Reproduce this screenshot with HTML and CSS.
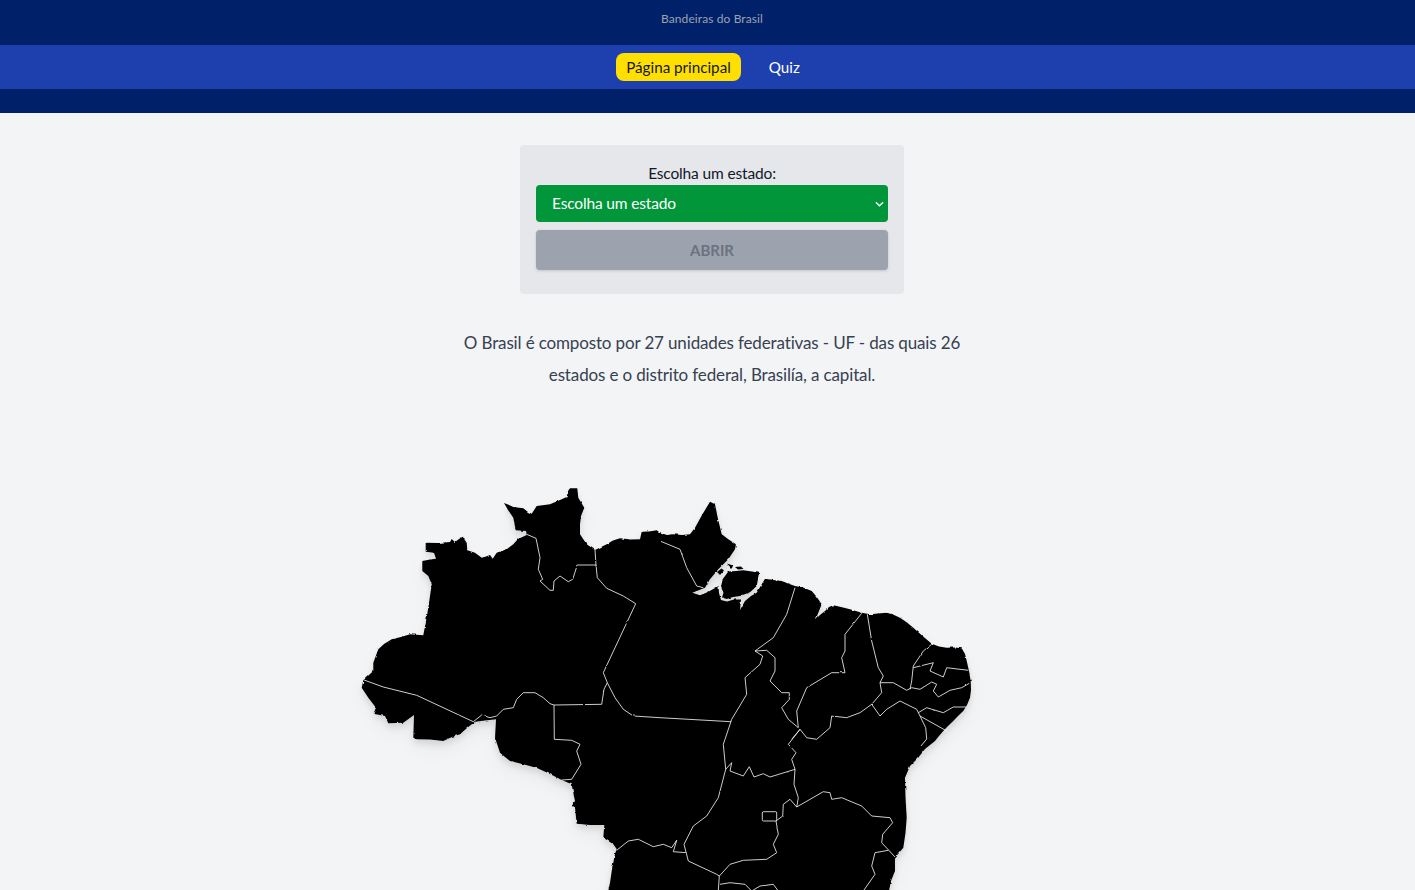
FILE: index.html
```html
<!DOCTYPE html>
<html lang="pt-BR">
<head>
  <meta charset="UTF-8">
  <title>Bandeiras do Brasil</title>
  <link rel="stylesheet" href="styles.css">
</head>
<body>

<header class="site-header">
  <p class="site-title">Bandeiras do Brasil</p>
  <nav class="site-nav">
    <a class="nav-link active" href="#">Página principal</a>
    <a class="nav-link" href="#">Quiz</a>
  </nav>
  <div class="header-foot"></div>
</header>

<main class="content">
  <form class="state-card">
    <label class="state-label" for="stateSelect">Escolha um estado:</label>
    <div class="select-wrap">
      <select id="stateSelect" class="state-select">
        <option>Escolha um estado</option>
      </select>
      <svg class="select-arrow" viewBox="0 0 10 6" width="9" height="6"><path d="M1 1l4 4 4-4" fill="none" stroke="#fff" stroke-width="1.5"/></svg>
    </div>
    <button class="open-btn" type="button" disabled>ABRIR</button>
  </form>

  <p class="intro">O Brasil é composto por 27 unidades federativas - UF - das quais 26 estados e o distrito federal, Brasilía, a capital.</p>

  <svg class="map" viewBox="350 470 724 420" width="724" height="420" role="img" aria-label="Mapa do Brasil">
    <defs>
      <!-- deixa o contorno do litoral e das divisas irregular -->
      <filter id="rough" x="-5%" y="-5%" width="110%" height="110%" color-interpolation-filters="sRGB">
        <feTurbulence type="fractalNoise" baseFrequency="0.2" numOctaves="2" seed="4"/>
        <feDisplacementMap in="SourceGraphic" scale="2.4" xChannelSelector="R" yChannelSelector="G"/>
        <feGaussianBlur stdDeviation="0.35"/>
      </filter>
      <filter id="rough-line" x="-5%" y="-5%" width="110%" height="110%" color-interpolation-filters="sRGB">
        <feTurbulence type="fractalNoise" baseFrequency="0.16" numOctaves="1" seed="9"/>
        <feDisplacementMap in="SourceGraphic" scale="2" xChannelSelector="R" yChannelSelector="G"/>
        <feGaussianBlur stdDeviation="0.3"/>
      </filter>
    </defs>
    <g class="land">
      <g filter="url(#rough)">
      <!-- continente -->
      <path d="M425.7 541.7L438 542L450 541L451.7 538L455 541L459 538L462.7 535.7L466.7 541.7L467.3 549.3L475 551.7L481.7 556.7L486 555.5L490 554L492.7 557.7L496.7 551.7L506.7 548.3L513.3 543.3L518 538L526.7 534L526 530L515.7 529.3L513.3 516.7L508 509L504 502L508 503.5L513.3 506L523.3 507.3L528 511L531.7 512.7L536.7 505L550 503.3L560 499L566.7 496L568 490L570 487.3L577.3 487.3L578.3 496.7L584.3 506.7L581 515L580 523.3L580 533.3L586.7 543.3L595 549L606.7 543.3L613 539.5L620 537.3L630 538.5L640 538.3L641.7 530.7L649 530.5L656.7 529.3L660 531.7L667 534L673.3 533.3L682 534L690 533.3L695 526.7L702 514L710 500.7L715 503.3L718 518L721.7 533.3L728.3 538.3L736 543.3L735 548.3L728.3 558.3L718.3 568.3L710 578.3L705 586.7L692.3 591.7L700 594.3L708 591L718.5 585L719 592L721 599L727 600.5L734 598.5L741 598.5L740 609L745 600L751 595L756.7 591.7L761.7 583.3L765 577.7L773 579L781.7 580L788 582.5L795 585L803 586.5L811.7 590L816 595L818.3 598.3L821.7 603.3L815.7 618.3L820 614L825 610L829 606L833.3 604.3L841 606L850 608.3L861.7 611.7L870 613.3L878 612.5L886.7 611.7L893 613.5L900 616.7L907 621.5L913.3 626.7L922 634.5L931.7 642.7L939 645.5L946.7 646.7L955 646.5L961.7 647.3L965 653L966.7 660L969 670L970.7 680L971 689L970 696.7L967 704L963.3 710L958 715L953.3 720L948 725L943.3 730L939 735L935 740L925 748L918 757L910 765L905 776.7L905.5 796L906.7 816.7L905.5 832L903.3 846.7L895 856.7L895 870L891 880L887 900L606 900L610 881.7L612 868L615 853L616.7 848L613.3 843.3L603.3 836.7L604.3 824L590 824L576.7 822.7L575 806.7L571.7 805L575 800L573 791L571.7 783.3L561.7 779L550 773L537 767L523.3 763.3L510 760L505 756L500 751.7L495 736.7L496 718.3L485 719.5L475 720.7L467 727L460 733.3L452 736L443.3 740L430 738.5L416.7 738.3L413.3 736.7L414 714L403.3 721.7L388.3 722.3L385 715L373.3 712.7L376 706.7L368.3 696.7L361.7 686.7L363.3 679.3L373.3 670L373.3 661.7L378.3 648.3L384 643L391.7 638.3L401 636L410 633.3L423.3 634.3L426 620L428.3 606.7L430 595L431.7 583.3L428.3 575L422.3 570L422.3 560L430 558.5L436 557.7L434 551.7L425.7 550.7Z"/>
      <!-- ilha de Marajó -->
      <path d="M722.5 578.5L728.3 570.5L736 570L743.3 569.3L752 570.5L759 571.7L758 578L756.7 585L750 591.2L740 595L733 596L726.7 598L722 596.5L723.5 591.7L721 586Z"/>
      <!-- ilhas do estuário -->
      <path d="M717 571L721.5 567.5L724 569.5L720 574Z"/>
      <path d="M727 562.5L733 564.5L731 567Z"/>
      <path d="M735 566L741 565.5L743.5 568L738 568.5Z"/>
      </g>
    </g>

    <g class="borders" filter="url(#rough-line)">
      <path d="M526.7 533.3L536 537.3L538 547L540 556.7L538.3 568.3L542.7 578.3L540 580L550 589.3L553.3 589.3L554 580L560 575L568.3 580.7L572.7 578.3L577.3 564L596 564"/>
      <path d="M595 549L596 564L597.3 576.7L606.7 587.3L623.3 595L635.7 602.7L603.3 671.7L607.3 681.7L604 688.3L601.7 703.3L554 704L550 702.7L543.3 696.7L535 691.7L523.3 691.7L516.7 698.3L513.3 706.7L503.3 708.3L496.7 715L490 716.7L481.7 714L473.3 720.7"/>
      <path d="M364 679L383.3 686L416.7 694.3L473.3 720.7"/>
      <path d="M554 704L554.3 738.3L571.7 739.3L580 743.3L576.7 750L581 763.3L571.7 778.3L561.7 779"/>
      <path d="M607.3 681.7L615 696.7L623.3 708.3L633.3 715L660 716.7L731 720.7"/>
      <path d="M660 540L680 548.3L686.7 566.7L696.7 585L703.3 586.7"/>
      <path d="M795 586.7L786.7 613.3L773.3 636.7L755 650L762.7 655L760 663.3L745 676.7L746.7 693.3L731.7 718.3L725 738.3L723.3 743.3L725.7 768.3"/>
      <path d="M755 650L766.7 649.3L775 656.7L775 670L770 680L781.7 691.7L789.3 691.7L789.3 698.3L781.7 706.7L788.3 718.3L798.3 726.7"/>
      <path d="M861.7 612.3L845 633.3L845 650L841.7 656.7L845 671.7L831.7 671.7L806.7 686.7L796.7 710L798.3 726.7"/>
      <path d="M867.3 613.3L871.7 640L878.3 666.7L883.3 675L880 681.7L881.7 691.7L871.7 703.3L860 711.7L846.7 716.7L831.7 715L830 726.7L816.7 738.3L806.7 736.7L800 728.3L791.7 738.3"/>
      <path d="M871.7 703.3L880 715L886.7 708.3L900 700L916.7 708.3L920 715L946.7 730"/>
      <path d="M920 715L925.7 726.7L926.7 738L921 745"/>
      <path d="M880 681.7L893.3 681.7L906.7 689.3L911.7 686.7L920 688.3L931.7 681L936.7 683.3L933.3 690L938.3 696L950 689.3L961.7 686.7L969.3 682.3"/>
      <path d="M931.7 643.3L923.3 650L913.3 665L911.7 680L910 688.3"/>
      <path d="M913.3 666.7L933.3 661.7L930 670L943.3 676L946.7 666.7L968.3 669.3"/>
      <path d="M918.3 711.7L926.7 706.7L943.3 711.7L953.3 706L966 706"/>
      <path d="M800 728.3L788.3 743.3L796 751.7L791.7 758.3L795 768.3L794 783.3L798.3 796.7L796.7 806"/>
      <path d="M795 768.3L770 776L763.3 772.7L754 776L749.3 765.7L743.3 775L730 770L731.7 761.7L725.7 768.3"/>
      <path d="M725.7 768.3L718.3 796.7L706.7 815L693.3 825L684 843.3L688.3 860L716.7 873.3L719.3 875"/>
      <path d="M616.7 849.3L628.3 840L638.3 838.3L653.3 845.7L663.3 843.3L671.7 846.7L676.7 839.3L673.3 850.7L686 851.7"/>
      <path d="M719.3 875L730 863.3L743.3 859.3L766.7 858.3L776.7 851.7L773.3 843.3L778.3 833.3L776 820L782.7 815L783.3 803.3L790 798.3L796.7 806"/>
      <path d="M763.5 810.7H775.5Q776.7 810.7 776.7 812V818.7Q776.7 820 775.5 820H763.5Q762.3 820 762.3 818.7V812Q762.3 810.7 763.5 810.7Z"/>
      <path d="M796.7 806L823.3 790.7L830 791.7L831.7 798.3L841.7 796.7L861.7 805L871.7 815L890 816.7L892.7 821.7L882.7 833.3L881.7 841.7L895 856"/>
      <path d="M888.3 849.3L875 851.7L871.7 865L875 873.3L863.3 890"/>
      <path d="M719.3 875L718.3 890"/>
      <path d="M720 883.3L730 881.7L745 883.3L751.7 890L760 885L773.3 883.3L778.3 890"/>
    </g>
  </svg>
</main>

</body>
</html>
```

FILE: styles.css
```css
html {
  overflow: hidden;
}

body {
  margin: 0;
  width: 1424px;
  background: #f3f4f6;
  font-family: "Lato", "Noto Sans", sans-serif;
  color: #111827;
}

.site-header {
  background: #002169;
}

.site-title {
  margin: 0;
  height: 45px;
  line-height: 37px;
  text-align: center;
  font-size: 12px;
  letter-spacing: 0.1px;
  color: #9ca3af;
}

.site-nav {
  display: flex;
  justify-content: center;
  align-items: center;
  gap: 18px;
  height: 44px;
  padding-left: 2px;
  background: #1e40af;
}

.nav-link {
  padding: 0 10px;
  height: 28px;
  line-height: 28px;
  border-radius: 8px;
  font-size: 15.2px;
  color: #fff;
  text-decoration: none;
}

.nav-link.active {
  background: #ffdf00;
  color: #111827;
}

.header-foot {
  height: 24px;
}

.content {
  display: flex;
  flex-direction: column;
  align-items: center;
  padding-top: 32px;
}

.state-card {
  display: flex;
  flex-direction: column;
  box-sizing: border-box;
  width: 384px;
  height: 149px;
  padding: 16px;
  background: #e5e7eb;
  border-radius: 4px;
}

.state-label {
  height: 24px;
  line-height: 24px;
  text-align: center;
  font-size: 15.5px;
  letter-spacing: -0.15px;
}

.select-wrap {
  position: relative;
}

.state-select {
  display: block;
  width: 100%;
  height: 37px;
  padding: 0 16px 1px;
  border: 0;
  border-radius: 4px;
  background: #009639;
  color: #fff;
  font: inherit;
  font-size: 15.5px;
  letter-spacing: -0.15px;
  appearance: none;
}

.select-arrow {
  position: absolute;
  right: 4px;
  top: 16px;
}

.open-btn {
  height: 40px;
  margin-top: 8px;
  border: 0;
  border-radius: 4px;
  background: #9ca3af;
  color: #6b7280;
  font: inherit;
  font-size: 15px;
  font-weight: 700;
  box-shadow: 0 1px 3px rgba(0, 0, 0, 0.15);
}

.intro {
  width: 512px;
  margin: 33px 0 0;
  text-align: center;
  font-size: 17px;
  letter-spacing: -0.14px;
  line-height: 32px;
  color: #374151;
}

.map {
  display: block;
  margin-top: 80px;
}

.land {
  fill: #000;
  filter: drop-shadow(0 10px 8px rgba(0, 0, 0, 0.04)) drop-shadow(0 4px 3px rgba(0, 0, 0, 0.1));
}

.borders path {
  fill: none;
  stroke: #fff;
  stroke-width: 1;
  stroke-opacity: 0.8;
  stroke-linejoin: round;
}
```
